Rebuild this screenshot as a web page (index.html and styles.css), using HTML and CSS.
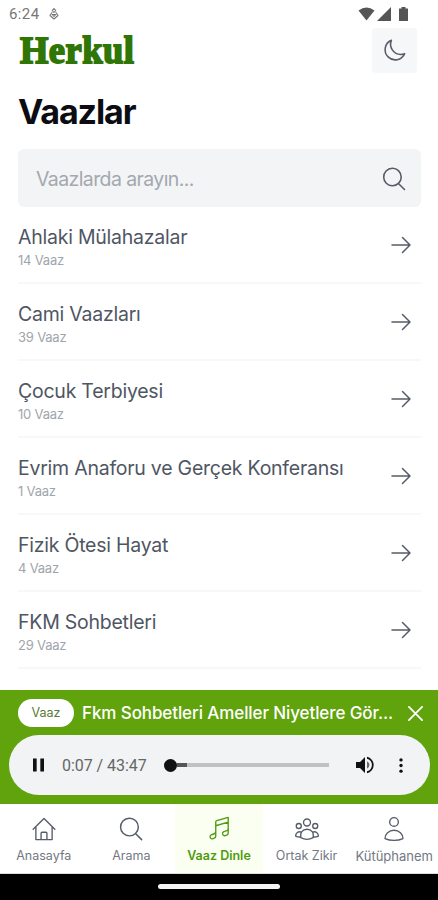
FILE: index.html
```html
<!DOCTYPE html>
<html lang="tr">
<head>
<meta charset="utf-8">
<meta name="viewport" content="width=device-width, initial-scale=1">
<title>Vaazlar</title>
<link rel="stylesheet" href="styles.css">
</head>
<body>
<svg class="defs" aria-hidden="true">
  <symbol id="arrow" viewBox="0 0 24 24"><path d="M3 12H21M13.500 4.500 21 12l-7.500 7.500"/></symbol>
  <symbol id="search" viewBox="0 0 24 24"><path d="m21 21-5.200-5.200m0 0A7.500 7.500 0 1 0 5.200 5.200a7.500 7.500 0 0 0 10.600 10.600Z"/></symbol>
</svg>
<div class="status">
  <span class="clock">6:24</span>
  <svg class="notice" viewBox="0 0 10 14"><path d="M5 1.500 6.800 3.500 5 5.500 3.200 3.500ZM3 5.500 1 8.500 5 12l4-3.500L7 5.500M3.200 7.500h3.600L5 9.500Z"/></svg>
  <div class="signals">
    <svg width="17" height="14" viewBox="0 0 17 14"><path d="M.500 3.500Q8.500-2.500 16.500 3.500L8.500 13.500Z"/></svg>
    <svg width="14" height="14" viewBox="0 0 14 14"><path d="M14 0V14H0Z"/></svg>
    <svg class="battery" width="9" height="14" viewBox="0 0 9 14"><path d="M2.500 0h4v1.500H9V14H0V1.500h2.500Z"/></svg>
  </div>
</div>
<header class="header">
  <div class="logo">Herkul</div>
  <button class="theme" aria-label="Tema"><svg viewBox="0 0 24 24"><path d="M21.750 15A9.700 9.700 0 0 1 18 15.750 9.750 9.750 0 0 1 9 2.250a9.750 9.750 0 1 0 12.750 12.750Z"/></svg></button>
</header>
<main class="main">
  <h1>Vaazlar</h1>
  <div class="search"><span>Vaazlarda arayın...</span><svg><use href="#search"/></svg></div>
  <ul class="list">
    <li><div><h2>Ahlaki Mülahazalar</h2><p>14 Vaaz</p></div><svg><use href="#arrow"/></svg></li>
    <li><div><h2>Cami Vaazları</h2><p>39 Vaaz</p></div><svg><use href="#arrow"/></svg></li>
    <li><div><h2>Çocuk Terbiyesi</h2><p>10 Vaaz</p></div><svg><use href="#arrow"/></svg></li>
    <li><div><h2>Evrim Anaforu ve Gerçek Konferansı</h2><p>1 Vaaz</p></div><svg><use href="#arrow"/></svg></li>
    <li><div><h2>Fizik Ötesi Hayat</h2><p>4 Vaaz</p></div><svg><use href="#arrow"/></svg></li>
    <li><div><h2>FKM Sohbetleri</h2><p>29 Vaaz</p></div><svg><use href="#arrow"/></svg></li>
  </ul>
</main>
<section class="player">
  <div class="now">
    <span class="tag">Vaaz</span>
    <span class="track-title">Fkm Sohbetleri Ameller Niyetlere Gör...</span>
    <svg class="close" viewBox="0 0 16 16"><path d="m1 1 14 14M15 1 1 15"/></svg>
  </div>
  <div class="audio">
    <svg class="pause" viewBox="0 0 12 14"><path d="M0 0h4v14H0ZM8 0h4v14H8Z"/></svg>
    <span class="time">0:07 / 43:47</span>
    <div class="seek"><i class="knob"></i><i class="buffered"></i></div>
    <svg class="volume" viewBox="0 0 18 18"><path d="M0 6v6h4l5 5V1L4 6Z"/><path d="M11 5.200v7.600a4.200 4.200 0 0 0 0-7.600Z" opacity=".6"/><path d="M11 .700v2a6.500 6.500 0 0 1 0 12.600v2A8.500 8.500 0 0 0 11 .700Z"/></svg>
    <svg class="more" viewBox="0 0 4 16"><circle cx="2" cy="2" r="1.800"/><circle cx="2" cy="8" r="1.800"/><circle cx="2" cy="14" r="1.800"/></svg>
  </div>
</section>
<nav class="nav">
  <a><svg viewBox="0 0 24 24"><path d="m2 12.300 10-10 10 10M4.500 10.200V21.800h15V10.200M9.300 21.800v-5.800q0-1 1-1h3.400q1 0 1 1v5.800"/></svg><span>Anasayfa</span></a>
  <a><svg viewBox="1 1 22 22"><use href="#search" width="24" height="24"/></svg><span>Arama</span></a>
  <a class="active"><svg viewBox="0 0 24 24"><path d="M9 9 20.500 5.700M9 18.500V5.400a1.200 1.200 0 0 1 .900-1.100L20.500 1.300v14.300a2.300 2.300 0 0 1-1.700 2.200l-1.300.400a2 2 0 0 1-1.100-3.800l2.400-.700a2.300 2.300 0 0 0 1.700-2.200M9 18.500a2.300 2.300 0 0 1-1.700 2.200l-1.300.400a2 2 0 0 1-1.100-3.800l2.400-.700A2.300 2.300 0 0 0 9 14.400"/></svg><span>Vaaz Dinle</span></a>
  <a><svg viewBox="0 0 24 24"><circle cx="12" cy="6" r="3.200"/><circle cx="4.400" cy="9.200" r="2.300"/><circle cx="19.600" cy="9.200" r="2.300"/><path d="M6.300 20c-1.200-4.500 1.700-7.800 5.700-7.800s6.900 3.300 5.700 7.800c-3.300 1.800-8.100 1.800-11.400 0ZM6.600 14.800C4 13.900 1.500 15.600 1.500 18.500c1.400.800 2.900 1 4.500.9M17.400 14.800c2.600-.9 5.100.8 5.100 3.700-1.400.8-2.900 1-4.500.9"/></svg><span>Ortak Zikir</span></a>
  <a><svg viewBox="0 0 24 24"><circle cx="12" cy="5.500" r="4"/><path d="M3.700 20.800c0-4.300 3.500-7.600 8.300-7.600s8.300 3.300 8.300 7.600c-4.800 2.300-11.800 2.300-16.600 0Z"/></svg><span class="wide">Kütüphanem</span></a>
</nav>
<div class="gesture"><i></i></div>
</body>
</html>
```
FILE: styles.css
```css
* { box-sizing: border-box; margin: 0; padding: 0; }
body { width: 438px; height: 900px; overflow: hidden; display: flex; flex-direction: column; background: #fff; font-family: Inter, sans-serif; color: #4f5663; }
svg { display: block; flex: none; fill: none; stroke: #565c68; stroke-width: 1.5; stroke-linecap: round; stroke-linejoin: round; }
.defs { position: absolute; width: 0; height: 0; }
.status { height: 28px; flex: none; display: flex; align-items: center; padding: 0 30px 0 9px; }
.clock { font: 15px Roboto, sans-serif; letter-spacing: .4px; color: #777; }
.notice { width: 10px; height: 14px; margin-left: 9px; stroke: #777; stroke-width: 1.1; }
.signals { margin-left: auto; display: flex; gap: 2px; }
.signals svg { fill: #555; stroke: none; }
.signals .battery { margin-left: 6px; }
.header { height: 45px; flex: none; display: flex; justify-content: space-between; align-items: center; padding: 0 21px 0 20px; }
.logo { font: bold 38px/47px "Liberation Serif", serif; color: #2f7606; -webkit-text-stroke: 1.8px #2f7606; transform: scaleX(.96); transform-origin: left; letter-spacing: .5px; }
.theme { width: 45px; height: 45px; border: 0; border-radius: 4px; background: #f6f7f9; display: grid; place-items: center; }
.theme svg { width: 25px; height: 25px; }
.main { padding: 0 17px 0 18px; height: 617px; flex: none; }
h1 { height: 76px; padding-top: 18px; font-size: 34px; line-height: 42px; font-weight: 700; letter-spacing: -1.100px; color: #0b0d12; }
.search { height: 58px; border-radius: 6px; background: #f2f4f6; display: flex; align-items: center; justify-content: space-between; padding: 2px 13px 0 18px; font-size: 19.500px; letter-spacing: -.6px; color: #a4a8af; }
.search svg { width: 28px; height: 28px; stroke-width: 1.350; }
.list { list-style: none; }
.list li { height: 77px; border-bottom: 2px solid #f7f8f8; display: flex; justify-content: space-between; padding: 17px 8px 0 0; }
.list svg { width: 24px; height: 24px; margin-top: 9px; }
h2 { font-size: 19.500px; line-height: 26px; font-weight: 400; letter-spacing: -.240px; white-space: nowrap; }
.list p { font-size: 13px; line-height: 20px; letter-spacing: -.200px; color: #a0a5ad; }
.player { height: 114px; flex: none; background: #60a30c; padding-top: 9px; }
.now { height: 28px; display: flex; align-items: center; padding: 0 15px 0 18px; }
.tag { width: 56px; height: 28px; border-radius: 14px; background: #fff; color: #577b33; font-size: 12.500px; line-height: 28px; text-align: center; }
.track-title { margin-left: 8px; font-size: 17px; font-weight: 500; letter-spacing: -.100px; color: #fff; white-space: nowrap; }
.close { width: 15px; height: 15px; margin-left: auto; stroke: #fff; stroke-width: 1.900; }
.audio { height: 60px; margin: 8px 8px 0 9px; border-radius: 30px; background: #f1f3f5; display: flex; align-items: center; padding: 0 27px 0 24px; }
.audio svg { fill: #111; stroke: none; }
.pause { width: 11px; height: 14px; }
.time { width: 84px; margin-left: 18px; font: 16px Roboto, sans-serif; letter-spacing: -.050px; color: #666; white-space: nowrap; }
.seek { width: 165px; height: 13px; margin-left: 18px; display: flex; align-items: center; background: linear-gradient(#c0c1c2, #c0c1c2) center / 100% 4px no-repeat; border-radius: 2px; }
.knob { width: 13px; height: 13px; border-radius: 50%; background: #111; }
.buffered { width: 10px; height: 4px; background: #555; }
.volume { width: 18px; height: 18px; margin-left: 27px; }
.more { width: 4px; height: 15px; margin-left: auto; }
.nav { height: 70px; flex: none; display: grid; grid-template-columns: repeat(5, 1fr); border-bottom: 1px solid #ddd; }
.nav a { display: flex; flex-direction: column; align-items: center; padding-top: 12px; font-size: 12.500px; white-space: nowrap; }
.nav svg { width: 26px; height: 26px; stroke-width: 1.250; }
.nav span { line-height: 18px; margin-top: 5px; color: #737882; }
.nav .wide { font-size: 13px; }
.nav .active { background: #fafff1; }
.nav .active svg { stroke: #4f9b10; }
.nav .active span { color: #4f9b10; font-weight: 600; }
.gesture { height: 26px; flex: none; background: #000; display: flex; justify-content: center; padding-top: 10px; }
.gesture i { width: 122px; height: 5px; border-radius: 3px; background: #f3f3f3; }
```
